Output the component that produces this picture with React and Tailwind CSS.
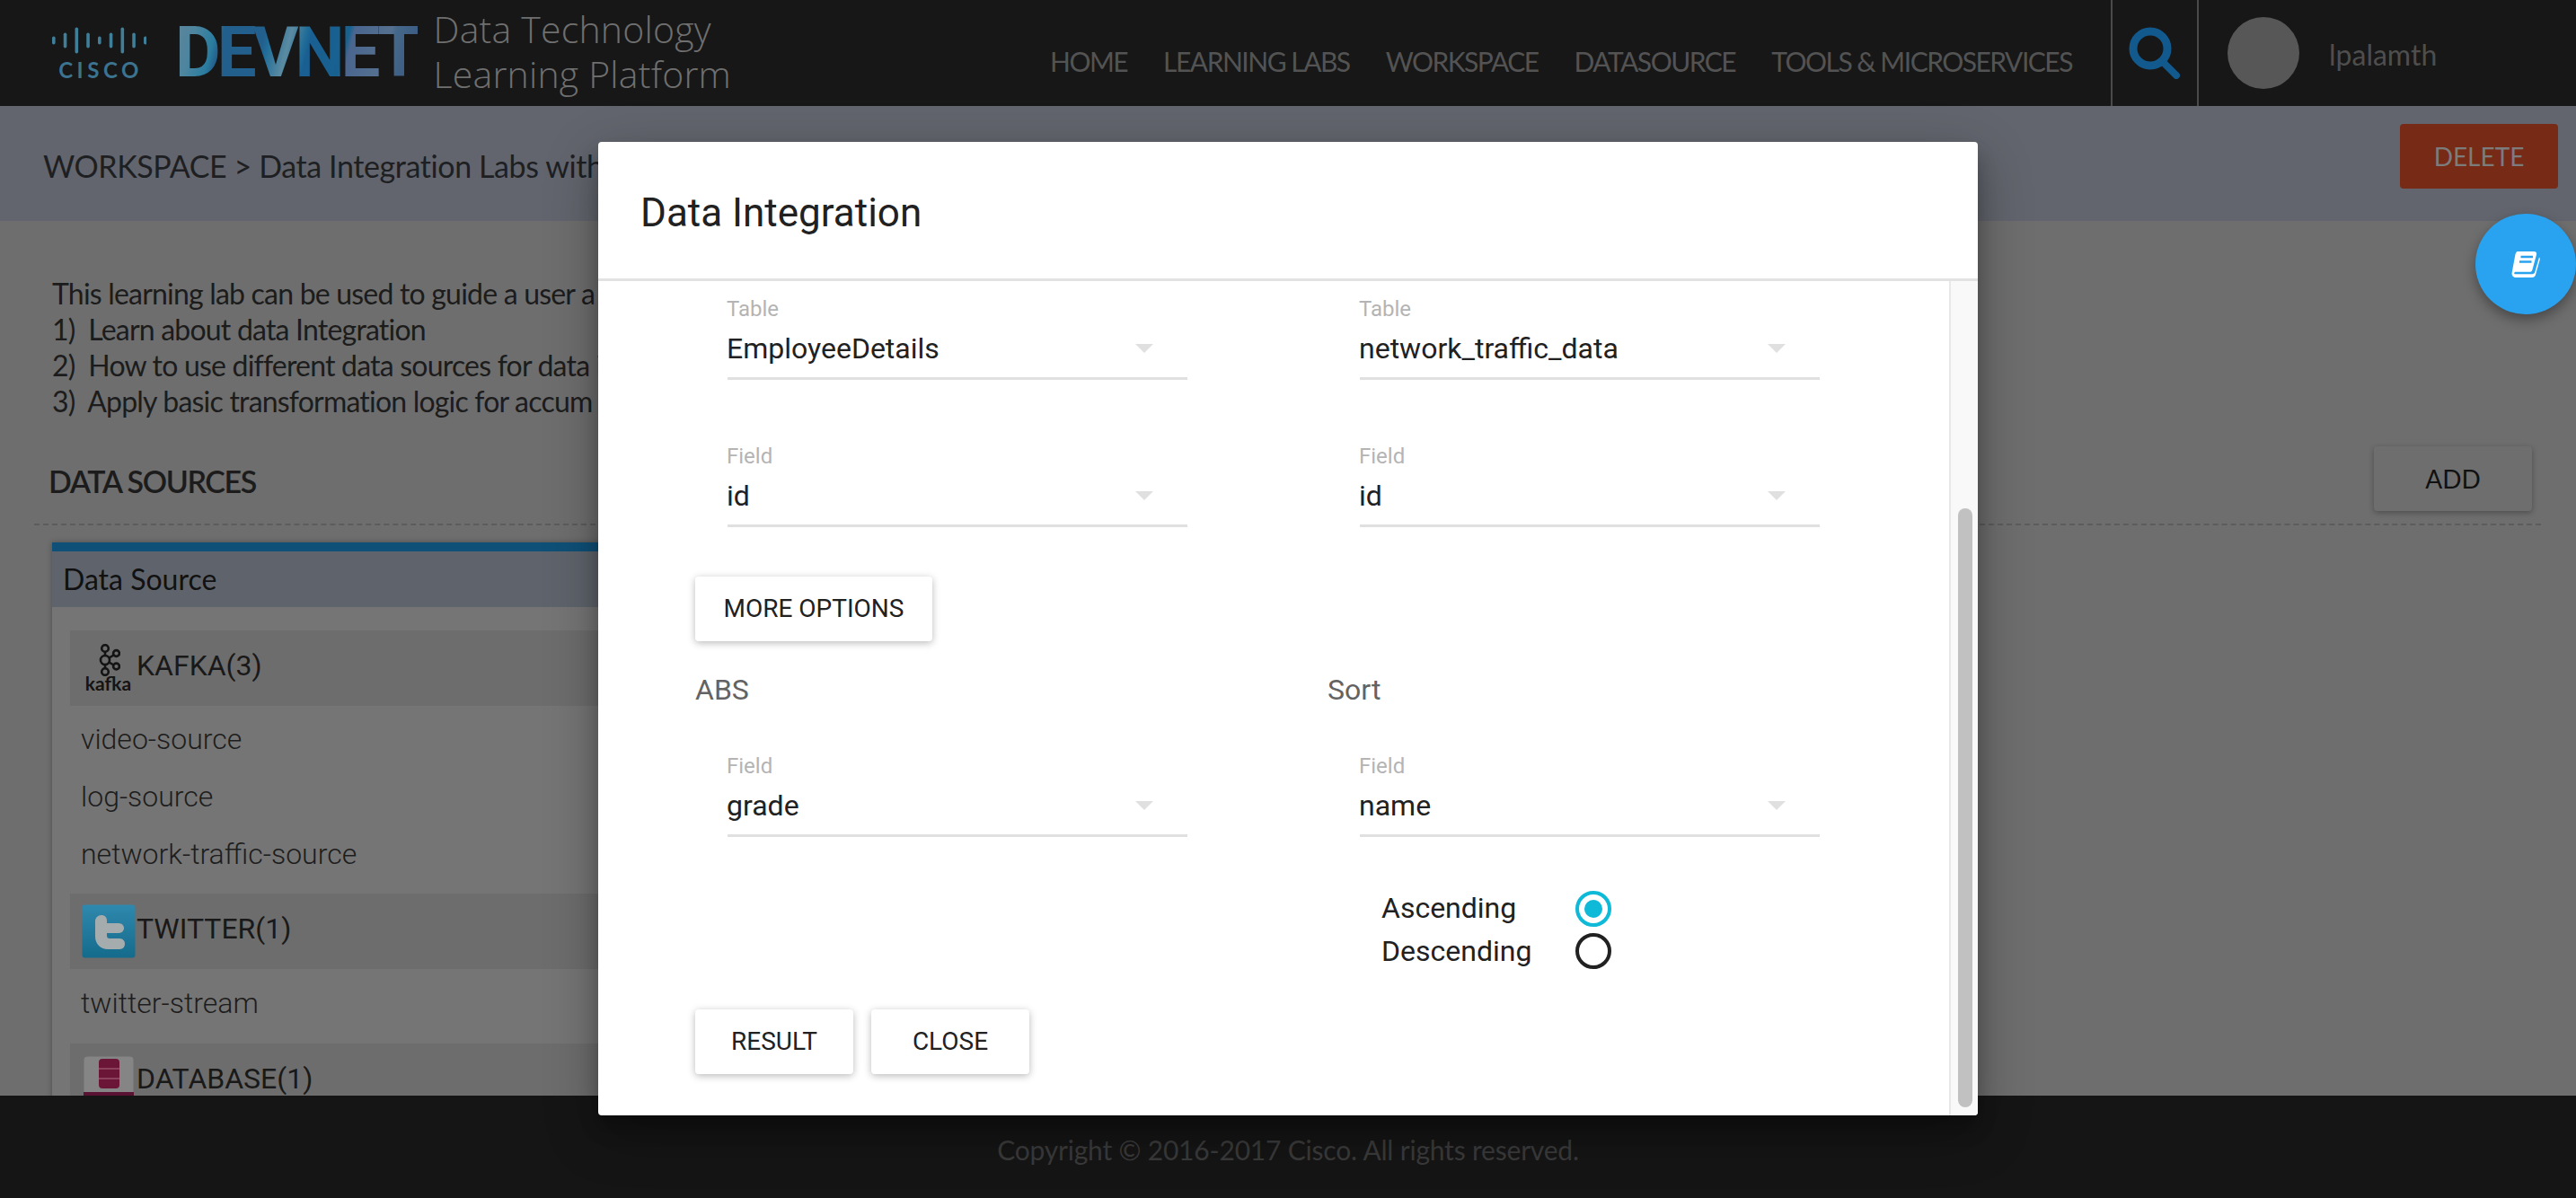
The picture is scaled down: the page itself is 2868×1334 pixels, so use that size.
import React from "react";

const roboto = { fontFamily: "Roboto, sans-serif" };

function Select({ label, value }) {
  return (
    <div className="w-[512px]">
      <div className="-ml-[1px] h-[30px] text-[24px] leading-[30px] text-[#b4b4b4]">{label}</div>
      <div className="mt-[11px] flex h-[53px] items-center justify-between border-b-[3px] border-[#e0e0e0] pb-[13px] pr-[38px] text-[32px] leading-[37px] text-[#212121]">
        <span className="-ml-[1px]">{value}</span>
        <span className="h-0 w-0 -translate-y-[1px] border-x-[10px] border-t-[10px] border-x-transparent border-t-[#e0e0e0]" />
      </div>
    </div>
  );
}

function ModalButton({ children, wide }) {
  return (
    <button className={`${wide ? "w-[264px]" : "w-[176px]"} h-[72px] rounded-[4px] bg-white text-[28px] text-[#212121] shadow-[0_2px_8px_rgba(0,0,0,0.28)]`}>
      {children}
    </button>
  );
}

function Radio({ checked }) {
  return checked ? (
    <span className="flex h-[40px] w-[40px] items-center justify-center rounded-full border-[4px] border-[#0fb9d8]">
      <span className="h-[20px] w-[20px] rounded-full bg-[#0fb9d8]" />
    </span>
  ) : (
    <span className="h-[40px] w-[40px] rounded-full border-[4px] border-[#212121]" />
  );
}

function Group({ icon, title }) {
  return (
    <div className="flex h-[84px] items-center bg-[#6d6d6d] text-[32px] text-[#191919]">
      <div className="flex w-[74px] shrink-0 items-center justify-center pl-[11px]">{icon}</div>
      <span className="-translate-y-[3px]">{title}</span>
    </div>
  );
}

function Item({ children }) {
  return <div className="flex h-[64px] items-center pl-[12px] text-[32px] font-light text-[#1d1d1d]">{children}</div>;
}

function KafkaIcon() {
  return (
    <div className="flex w-[56px] flex-col items-center">
      <svg width="27" height="36" viewBox="0 0 27 36" fill="none" stroke="#141414" strokeWidth="2.6">
        <circle cx="10" cy="5" r="3.800" />
        <circle cx="10" cy="18" r="5" />
        <circle cx="10" cy="31" r="3.800" />
        <circle cx="22.500" cy="10.500" r="3.400" />
        <circle cx="22.500" cy="25" r="3.400" />
        <path d="M10 9v4M10 23v4M14.500 15.500l5-3M14.500 20.500l5 3" />
      </svg>
      <span className="-mt-[2px] text-[21px] font-bold leading-[20px] text-[#141414]" style={{ fontFamily: "Lato, sans-serif" }}>kafka</span>
    </div>
  );
}

function TwitterIcon() {
  return (
    <svg width="60" height="60" viewBox="0 0 60 60" className="shrink-0">
      <defs>
        <linearGradient id="tw" x1="0" y1="0" x2="0" y2="1">
          <stop offset="0" stopColor="#2f88ad" />
          <stop offset="1" stopColor="#146b8c" />
        </linearGradient>
      </defs>
      <rect x="0.5" y="0.5" width="59" height="59" rx="3" fill="url(#tw)" />
      <path d="M22 12c-4 0-7 3-7 7v17c0 8 6 14 14 14h13c4 0 6-3 6-6s-2-6-6-6H31c-2 0-3-1-3-3v-3h13c4 0 6-3 6-5.500S45 21 41 21H28v-3c0-4-3-6-6-6z" fill="#a5acad" />
    </svg>
  );
}

function DbIcon() {
  return (
    <svg width="56" height="60" viewBox="0 0 56 60" className="mt-[3px] shrink-0">
      <rect x="0.5" y="0.5" width="55" height="59" rx="4" fill="#858585" />
      <rect x="0" y="40" width="56" height="20" fill="#5a1232" />
      <rect x="17" y="3" width="23" height="33" rx="4" fill="#6b1636" />
      <path d="M17 14h23M17 25h23" stroke="#96506a" strokeWidth="1.500" />
    </svg>
  );
}

function CiscoLogo() {
  const heights = [9, 17, 29, 17, 9, 17, 29, 17, 9];
  return (
    <div className="flex w-[108px] flex-col items-center">
      <svg width="106" height="30" viewBox="0 0 106 30">
        {heights.map((h, i) => (
          <rect key={i} x={1 + i * 12.750} y={15 - h / 2} width="3.600" height={h} rx="1.800" fill="#3f7f99" />
        ))}
      </svg>
      <span className="mt-[8px] pl-[4px] text-[24px] font-bold leading-[20px] tracking-[4.500px] text-[#3c7390]" style={{ fontFamily: "Lato, sans-serif" }}>CISCO</span>
    </div>
  );
}

function SearchIcon() {
  return (
    <svg width="58" height="58" viewBox="0 0 58 58" fill="none" stroke="#125a8e" strokeLinecap="round">
      <circle cx="24" cy="24" r="19" strokeWidth="9" />
      <path d="M38 39l15 15" strokeWidth="8" />
    </svg>
  );
}

function BookIcon() {
  return (
    <svg width="32" height="30" viewBox="0 0 32 30">
      <path d="M7 1h18c2.500 0 3.500 1.500 3 3.500l-4.600 17c-.4 1.500-1.500 2.300-3 2.300H5c-1.800 0-2.500 1.900-1 2.400h19.500c1.200 0 2.300-.8 2.700-1.900L31 7.500c.6.700 1 1.600.7 2.700L27 27c-.5 1.700-2 3-4 3H5c-3 0-5-2.500-4.300-5.500L4.500 4C5 2.500 5.800 1 7 1z" fill="#fff" />
      <path d="M10.500 7h13.500M9 12.500h13.500" stroke="#29a3ef" strokeWidth="2.400" />
    </svg>
  );
}

export default function App() {
  return (
    <div className="relative h-[1334px] w-[2868px] overflow-hidden bg-[#6e6e6e]" style={{ fontFamily: "Lato, sans-serif" }}>
      <header className="flex h-[118px] items-stretch bg-[#171717]">
        <div className="flex w-[1169px] shrink-0 items-center pl-[56px]">
          <CiscoLogo />
          <span
            className="ml-[31px] bg-[linear-gradient(105deg,#5f8499_0%,#4d859f_9%,#2a7c9f_17%,#235f8c_20%,#235f8c_36%,#1f6c98_38%,#5b8ba2_46%,#1f6c98_52%,#1a5f92_54%,#17618f_68%,#4a668f_70%,#55708f_84%,#44688a_86%,#3a5580_100%)] bg-clip-text text-[78px] font-bold leading-[80px] tracking-[-4px] text-transparent"
            style={roboto}
          >
            DEVNET
          </span>
          <div className="ml-[18px] -translate-y-[2px] text-[41px] font-light leading-[50px] tracking-[0.2px] text-[#6f6f6f]" style={{ fontFamily: "'Open Sans', sans-serif" }}>
            <div className="whitespace-nowrap">Data Technology</div>
            <div className="whitespace-nowrap">Learning Platform</div>
          </div>
        </div>
        <nav className="flex flex-1 items-center gap-[40px] whitespace-nowrap pt-[18px] text-[30px] tracking-[-1.500px] text-[#535353]">
          <span>HOME</span>
          <span>LEARNING LABS</span>
          <span>WORKSPACE</span>
          <span>DATASOURCE</span>
          <span>TOOLS &amp; MICROSERVICES</span>
        </nav>
        <div className="flex w-[98px] shrink-0 items-center justify-center border-x-2 border-[#4a4a4a]">
          <SearchIcon />
        </div>
        <div className="flex w-[420px] shrink-0 items-center pl-[32px]">
          <div className="h-[80px] w-[80px] rounded-full bg-[#575757]" />
          <span className="ml-[33px] translate-y-[2px] text-[32px] text-[#4e4e4e]">lpalamth</span>
        </div>
      </header>

      <div className="flex h-[128px] items-center justify-between bg-[#62656d] pl-[48px] pr-[20px]">
        <span className="translate-y-[2px] text-[34px] tracking-[-0.4px] text-[#1e1f22]">WORKSPACE &gt; Data Integration Labs with</span>
        <button className="-mt-[16px] h-[72px] w-[176px] rounded-[4px] bg-[#772a15] text-[28px] text-[#7c7c7c]">DELETE</button>
      </div>

      <main className="h-[974px] overflow-hidden pl-[38px] pr-[39px]">
        <div className="pl-[20px] pt-[61px] text-[32px] leading-[40px] tracking-[-0.8px] text-[#1c1c1c]">
          <div>This learning lab can be used to guide a user a</div>
          <div>1)&nbsp; Learn about data Integration</div>
          <div>2)&nbsp; How to use different data sources for data i</div>
          <div>3)&nbsp; Apply basic transformation logic for accum</div>
        </div>
        <div className="mt-[29px] flex h-[89px] items-start justify-between border-b-2 border-dashed border-[#5c5c5c] pr-[10px]">
          <span className="ml-[16px] mt-[14px] text-[34px] font-semibold tracking-[-1.400px] text-[#1c1c1c]">DATA SOURCES</span>
          <button className="mt-[1px] h-[72px] w-[176px] rounded-[4px] bg-[#6e6e6e] text-[28px] text-[#111] shadow-[0_2px_6px_rgba(0,0,0,0.3)]">ADD</button>
        </div>
        <section className="ml-[20px] mt-[19px] w-[1300px] shadow-[0_0_6px_rgba(0,0,0,0.3)]" style={roboto}>
          <div className="h-[10px] bg-[#0f5078]" />
          <div className="flex h-[62px] items-center bg-[#5f646c] pl-[12px] text-[32px] text-[#111]" style={{ fontFamily: "Lato, sans-serif" }}>Data Source</div>
          <div className="h-[600px] bg-[#757575] pl-[20px] pt-[26px]">
            <Group icon={<KafkaIcon />} title="KAFKA(3)" />
            <div className="py-[5px]">
              <Item>video-source</Item>
              <Item>log-source</Item>
              <Item>network-traffic-source</Item>
            </div>
            <div className="mt-[7px]"><Group icon={<TwitterIcon />} title="TWITTER(1)" /></div>
            <div className="py-[6px]"><Item>twitter-stream</Item></div>
            <div className="mt-[7px]"><Group icon={<DbIcon />} title="DATABASE(1)" /></div>
          </div>
        </section>
      </main>

      <footer className="absolute inset-x-0 bottom-0 flex h-[114px] items-center justify-center bg-[#151515] pt-[6px] text-[30px] tracking-[-0.2px] text-[#3a3a3a]">
        Copyright © 2016-2017 Cisco. All rights reserved.
      </footer>

      <button className="absolute right-0 top-[238px] z-20 flex h-[112px] w-[112px] items-center justify-center rounded-full bg-[#29a3ef] shadow-[0_6px_14px_rgba(0,0,0,0.35)]">
        <BookIcon />
      </button>

      <div className="absolute left-[666px] top-[158px] z-10 flex h-[1084px] w-[1536px] flex-col overflow-hidden rounded-[4px] bg-white shadow-[0_19px_60px_rgba(0,0,0,0.3),0_15px_20px_rgba(0,0,0,0.22)]" style={roboto}>
        <div className="flex h-[155px] shrink-0 items-center border-b-[3px] border-[#e2e2e2] pl-[47px] pt-[6px] text-[44px] text-[#212121]">Data Integration</div>
        <div className="flex min-h-0 flex-1">
          <div className="w-[1506px] shrink-0 overflow-hidden border-r-[2px] border-[#e8e8e8] pl-[108px] pt-[16px]">
            <div className="flex gap-[192px] pl-[36px]">
              <Select label="Table" value="EmployeeDetails" />
              <Select label="Table" value="network_traffic_data" />
            </div>
            <div className="mt-[70px] flex gap-[192px] pl-[36px]">
              <Select label="Field" value="id" />
              <Select label="Field" value="id" />
            </div>
            <div className="mt-[55px]"><ModalButton wide>MORE OPTIONS</ModalButton></div>
            <div className="mt-[34px] flex text-[32px] leading-[40px] text-[#636363]">
              <span className="w-[704px]">ABS</span>
              <span>Sort</span>
            </div>
            <div className="mt-[50px] flex gap-[192px] pl-[36px]">
              <Select label="Field" value="grade" />
              <Select label="Field" value="name" />
            </div>
            <div className="ml-[764px] mt-[60px] flex flex-col gap-[7px] text-[32px] text-[#212121]">
              <div className="flex h-[40px] items-center">
                <span className="w-[216px] -translate-y-[1px]">Ascending</span>
                <Radio checked />
              </div>
              <div className="flex h-[40px] items-center">
                <span className="w-[216px]">Descending</span>
                <Radio />
              </div>
            </div>
            <div className="mt-[45px] flex gap-[20px]">
              <ModalButton>RESULT</ModalButton>
              <ModalButton>CLOSE</ModalButton>
            </div>
          </div>
          <div className="flex-1 bg-[#f9f9f9] pl-[8px] pt-[253px]">
            <div className="h-[667px] w-[16px] rounded-full bg-[#c1c1c1]" />
          </div>
        </div>
      </div>
    </div>
  );
}
